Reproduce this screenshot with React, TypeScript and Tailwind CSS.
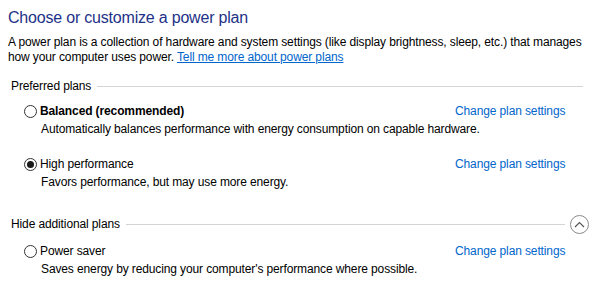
import React from "react";

const Radio = ({ checked }: { checked?: boolean }) => (
  <span className="relative inline-flex h-[13px] w-[13px] shrink-0 items-center justify-center rounded-full border border-[#333333] bg-white">
    {checked && <span className="h-[7px] w-[7px] rounded-full bg-[#1a1a1a]" />}
  </span>
);

const Plan = ({
  name,
  desc,
  bold,
  checked,
  className,
}: {
  name: string;
  desc: string;
  bold?: boolean;
  checked?: boolean;
  className?: string;
}) => (
  <div className={"pl-[24px] " + (className ?? "")}>
    <div className="flex h-[15px] items-center">
      <div className="flex flex-1 items-center gap-[3px]">
        <Radio checked={checked} />
        <span className={bold ? "font-bold" : ""}>{name}</span>
      </div>
      <div className="w-[139px] shrink-0 whitespace-nowrap text-[#0066cc]">Change plan settings</div>
    </div>
    <div className="mt-[3px] whitespace-nowrap pl-[17px] leading-[15px]">{desc}</div>
  </div>
);

export default function App() {
  return (
    <div
      className="h-[292px] w-[594px] overflow-hidden bg-white text-[12px] leading-[15px] tracking-[-0.12px] text-black"
      style={{ fontFamily: '"Segoe UI", "Liberation Sans", Arial, sans-serif' }}
    >
      <div className="pl-[8px] pt-[7px]">
        <h1 className="text-[16px] leading-[21px] tracking-[-0.2px] text-[#1e3287]">Choose or customize a power plan</h1>
        <p className="mt-[7px] whitespace-nowrap leading-[15px]">
          A power plan is a collection of hardware and system settings (like display brightness, sleep, etc.) that manages
          <br />
          how your computer uses power.{" "}
          <span className="text-[#0066cc] underline">Tell me more about power plans</span>
        </p>
      </div>
      <div className="mt-[14px] flex items-center pl-[11px] pr-[11px]">
        <span>Preferred plans</span>
        <div className="ml-[6px] h-px flex-1 bg-[#d4d4d4]" />
      </div>
      <Plan className="mt-[10px]" name="Balanced (recommended)" bold desc="Automatically balances performance with energy consumption on capable hardware." />
      <Plan className="mt-[20px]" name="High performance" checked desc="Favors performance, but may use more energy." />
      <div className="mt-[25px] flex items-center pl-[11px] pr-[5px]">
        <span>Hide additional plans</span>
        <div className="ml-[6px] h-px flex-1 bg-[#d4d4d4]" />
        <div className="ml-[5px] flex h-[19px] w-[19px] items-center justify-center rounded-full border border-[#8a8a8a]">
          <svg width="11" height="7" viewBox="0 0 11 7" fill="none">
            <path d="M1 6 L5.5 1.5 L10 6" stroke="#555" strokeWidth="1.2" />
          </svg>
        </div>
      </div>
      <Plan className="mt-[10px]" name="Power saver" desc="Saves energy by reducing your computer's performance where possible." />
    </div>
  );
}
